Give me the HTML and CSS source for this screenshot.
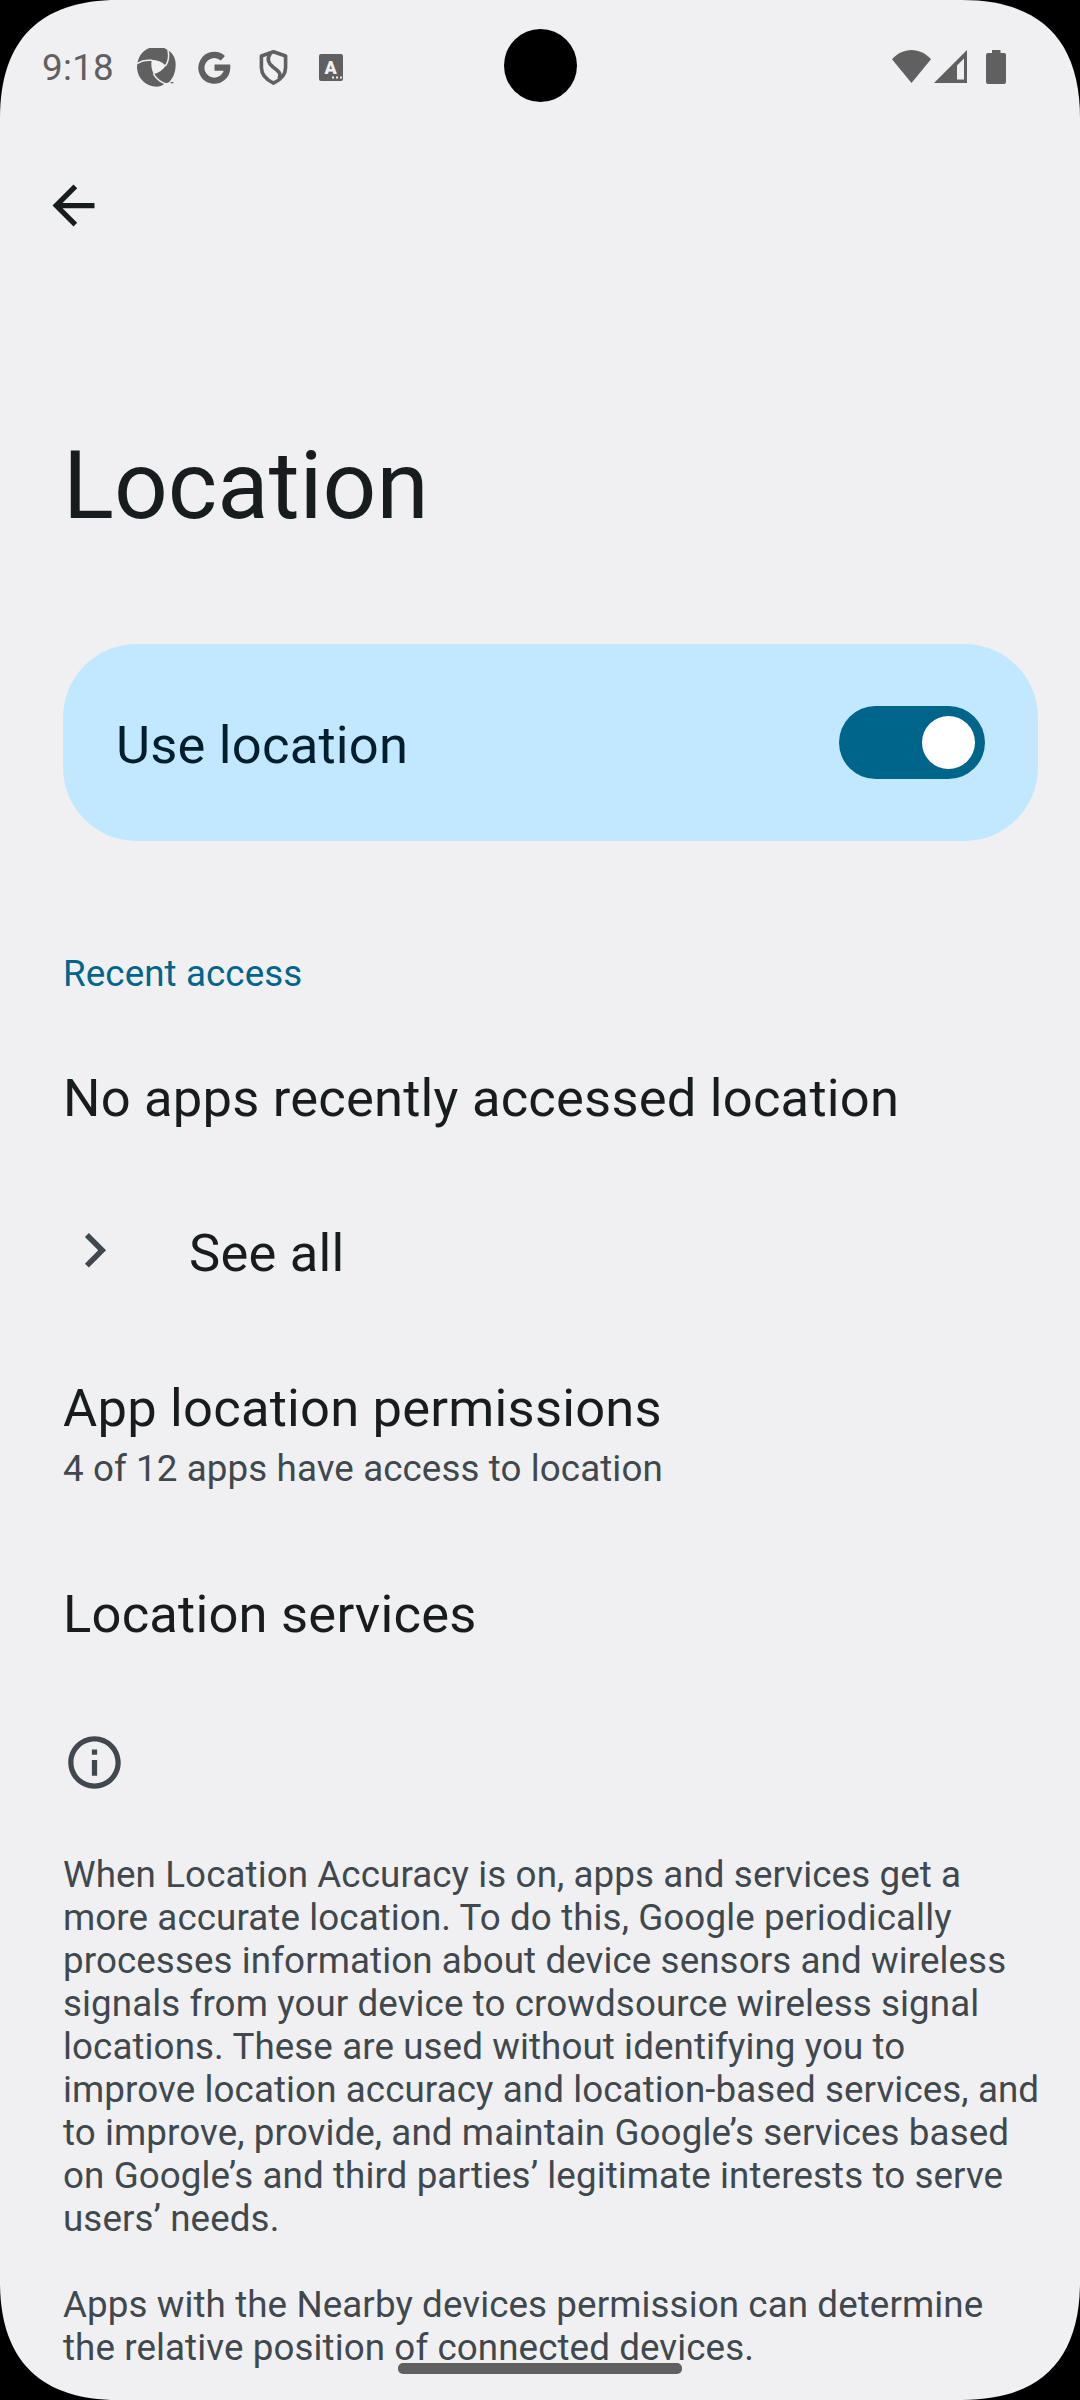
FILE: index.html
```html
<!DOCTYPE html>
<html lang="en">
<head>
<meta charset="utf-8">
<title>Location</title>
<link rel="stylesheet" href="styles.css">
</head>
<body>
<div class="screen">
  <header class="status">
    <span class="clock">9:18</span>
    <div class="notifications">
      <svg class="aperture" viewBox="51 54 117 117">
        <path fill="currentColor" d="M88 54H133L139 58C158 68 167 84 167 103C167 130 158 145 147 157L132 162C126 168 118 170 110 170C78 170 53 146 51 114C51 80 70 61 88 54Z"/>
        <path class="cut" d="M95 90C112 90 125 94 137 107C128 120 115 129 101 132C95 120 92 105 95 90Z"/>
        <path class="slit" d="M51 101C64 92 80 89 97 91M136 108C146 95 148 80 144 60M100 131C108 145 122 157 140 163"/>
        <path fill="currentColor" d="M152 156h8v4h-8z"/>
      </svg>
      <svg class="google" viewBox="0 0 33 33">
        <path fill="none" stroke="currentColor" stroke-width="6.2" d="M24.9 7.2A12.9 12.9 0 1 0 29.2 16.7H16.5"/>
      </svg>
      <svg class="shield" viewBox="0 0 29 35">
        <path class="line" d="M14.500 1.800L26.600 6V17.500C26.600 25 20 30.500 14.500 33.200C9 30.500 2.400 25 2.400 17.500V6Z"/>
        <path class="line" d="M11.500 3.500C7.500 8.500 9 13 14 17C20 21.500 22.500 23.500 20 28.500"/>
      </svg>
      <svg class="language" viewBox="0 0 24 27">
        <rect width="24" height="27" rx="2" fill="currentColor"/>
        <text class="letter" x="11.800" y="20" text-anchor="middle">A</text>
        <path class="cut" d="M13 22.500h2v2h-2zM17 22.500h2v2h-2zM21 22.500h2v2h-2z"/>
      </svg>
    </div>
    <div class="indicators">
      <svg class="wifi" viewBox="0 0 39 33"><path fill="currentColor" d="M19.500 33L0 9.300C5 3.500 12 0 19.500 0S34 3.500 39 9.300Z"/></svg>
      <svg class="signal" viewBox="0 0 33 33"><path fill="currentColor" fill-rule="evenodd" d="M0 33L33 0V33ZM23 15.500V29.600H30V8.500Z"/></svg>
      <svg class="battery" viewBox="0 0 20 34"><path fill="currentColor" d="M6 0h8.500v3H18a2 2 0 0 1 2 2V32a2 2 0 0 1-2 2H2a2 2 0 0 1-2-2V5a2 2 0 0 1 2-2H6Z"/></svg>
    </div>
    <div class="camera"></div>
  </header>

  <nav class="toolbar">
    <svg class="icon back" viewBox="0 0 24 24"><path fill="currentColor" d="M20 11H7.830l5.590-5.590L12 4l-8 8 8 8 1.410-1.410L7.830 13H20z"/></svg>
  </nav>

  <main class="content">
    <h1 class="title">Location</h1>
    <section class="main-switch">
      <span class="label">Use location</span>
      <span class="switch"><span class="thumb"></span></span>
    </section>
    <h2 class="category">Recent access</h2>
    <div class="label empty">No apps recently accessed location</div>
    <div class="see-all">
      <svg class="icon" viewBox="0 0 24 24"><path fill="currentColor" d="M9.850 4.550L8.350 6.050 13.400 11.150 8.350 16.250 9.850 17.750 16.400 11.150z"/></svg>
      <span class="label">See all</span>
    </div>
    <div class="permissions">
      <div class="label">App location permissions</div>
      <div class="summary">4 of 12 apps have access to location</div>
    </div>
    <div class="label services">Location services</div>
    <footer class="info">
      <svg class="icon" viewBox="0 0 24 24"><path fill="currentColor" d="M11 7h2v2h-2zM11 11h2v6h-2zM12 2C6.480 2 2 6.480 2 12s4.480 10 10 10 10-4.480 10-10S17.520 2 12 2zm0 18c-4.410 0-8-3.590-8-8s3.590-8 8-8 8 3.590 8 8-3.590 8-8 8z"/></svg>
      <p class="text">When Location Accuracy is on, apps and services get a<br>more accurate location. To do this, Google periodically<br>processes information about device sensors and wireless<br>signals from your device to crowdsource wireless signal<br>locations. These are used without identifying you to<br>improve location accuracy and location-based services, and<br>to improve, provide, and maintain Google’s services based<br>on Google’s and third parties’ legitimate interests to serve<br>users’ needs.</p>
      <p class="text">Apps with the Nearby devices permission can determine<br>the relative position of connected devices.</p>
    </footer>
  </main>
  <div class="gesture-bar"></div>
</div>
</body>
</html>
```
FILE: styles.css
```css
* { box-sizing: border-box; }

body {
  margin: 0;
  background: #000;
  font-family: Roboto, sans-serif;
  font-size: 36.75px;
  line-height: 43px;
  letter-spacing: 0.09px;
  color: #191c1e;
}

h1, h2, p { margin: 0; font-weight: 400; }
svg { display: block; flex: none; }

.screen {
  position: relative;
  width: 1080px;
  height: 2400px;
  overflow: hidden;
  background: #f0f0f3;
  clip-path: path("M0 118C0 40 40 0 118 0H962C1040 0 1080 40 1080 118V2282C1080 2360 1040 2400 962 2400H118C40 2400 0 2360 0 2282Z");
}

.status {
  display: flex;
  align-items: center;
  height: 134px;
  padding: 0 74px 0 42px;
  color: #606060;
}

.clock { width: 95px; letter-spacing: 0.3px; }
.notifications { display: flex; align-items: center; }
.aperture { width: 39px; height: 39px; }
.google { width: 33px; height: 33px; margin-left: 22px; }
.shield { width: 29px; height: 35px; margin-left: 28px; }
.language { width: 24px; height: 27px; margin-left: 31px; }
.cut { fill: #f0f0f3; }
.slit { fill: none; stroke: #f0f0f3; stroke-width: 4.5; }
.line { fill: none; stroke: currentColor; stroke-width: 3.6; stroke-linejoin: round; }
.letter { font-size: 18px; font-weight: 900; fill: #f0f0f3; }

.indicators { display: flex; align-items: center; margin-left: auto; }
.wifi { width: 39px; height: 33px; margin-top: -2px; }
.signal { width: 33px; height: 33px; margin-top: -1px; margin-left: 3px; }
.battery { width: 20px; height: 34px; margin-top: -1px; margin-left: 19px; }

.camera {
  position: absolute;
  top: 29px;
  left: 503.5px;
  width: 73px;
  height: 73px;
  border-radius: 50%;
  background: #000;
}

.toolbar { height: 147px; padding: 40px 42px 0; }
.icon { width: 63px; height: 63px; }

.content { padding: 149px 42px 0 63px; }
.title { font-size: 94.5px; line-height: 112px; letter-spacing: 0; }
.label { font-size: 52.5px; line-height: 62px; letter-spacing: 0.21px; }

.main-switch {
  display: flex;
  align-items: center;
  justify-content: space-between;
  height: 197px;
  margin-top: 102px;
  padding: 0 53px;
  border-radius: 73.5px;
  background: #c2e8ff;
  color: #001e2b;
}
.main-switch .label { padding-top: 4px; }

.switch {
  display: flex;
  justify-content: flex-end;
  width: 146px;
  height: 73px;
  padding: 10px;
  border-radius: 37px;
  background: #00658b;
}
.thumb { width: 53px; height: 53px; border-radius: 50%; background: #fff; }

.category { margin-top: 111px; font-size: 36.75px; color: #00658b; }
.empty { margin-top: 72px; }
.see-all { display: flex; align-items: center; gap: 63px; margin-top: 92px; }
.see-all .icon, .info .icon { color: #40484d; }
.permissions { margin-top: 93px; }
.summary, .text { color: #40484d; }
.summary { margin-top: 8px; }
.services { margin-top: 93px; }
.info { display: flex; flex-direction: column; margin-top: 86px; }
.info .text { margin-top: 43px; white-space: nowrap; }
.info .icon + .text { margin-top: 59px; }

.gesture-bar {
  position: absolute;
  left: 398px;
  top: 2363px;
  width: 284px;
  height: 11px;
  border-radius: 5px;
  background: #606060;
}
```
